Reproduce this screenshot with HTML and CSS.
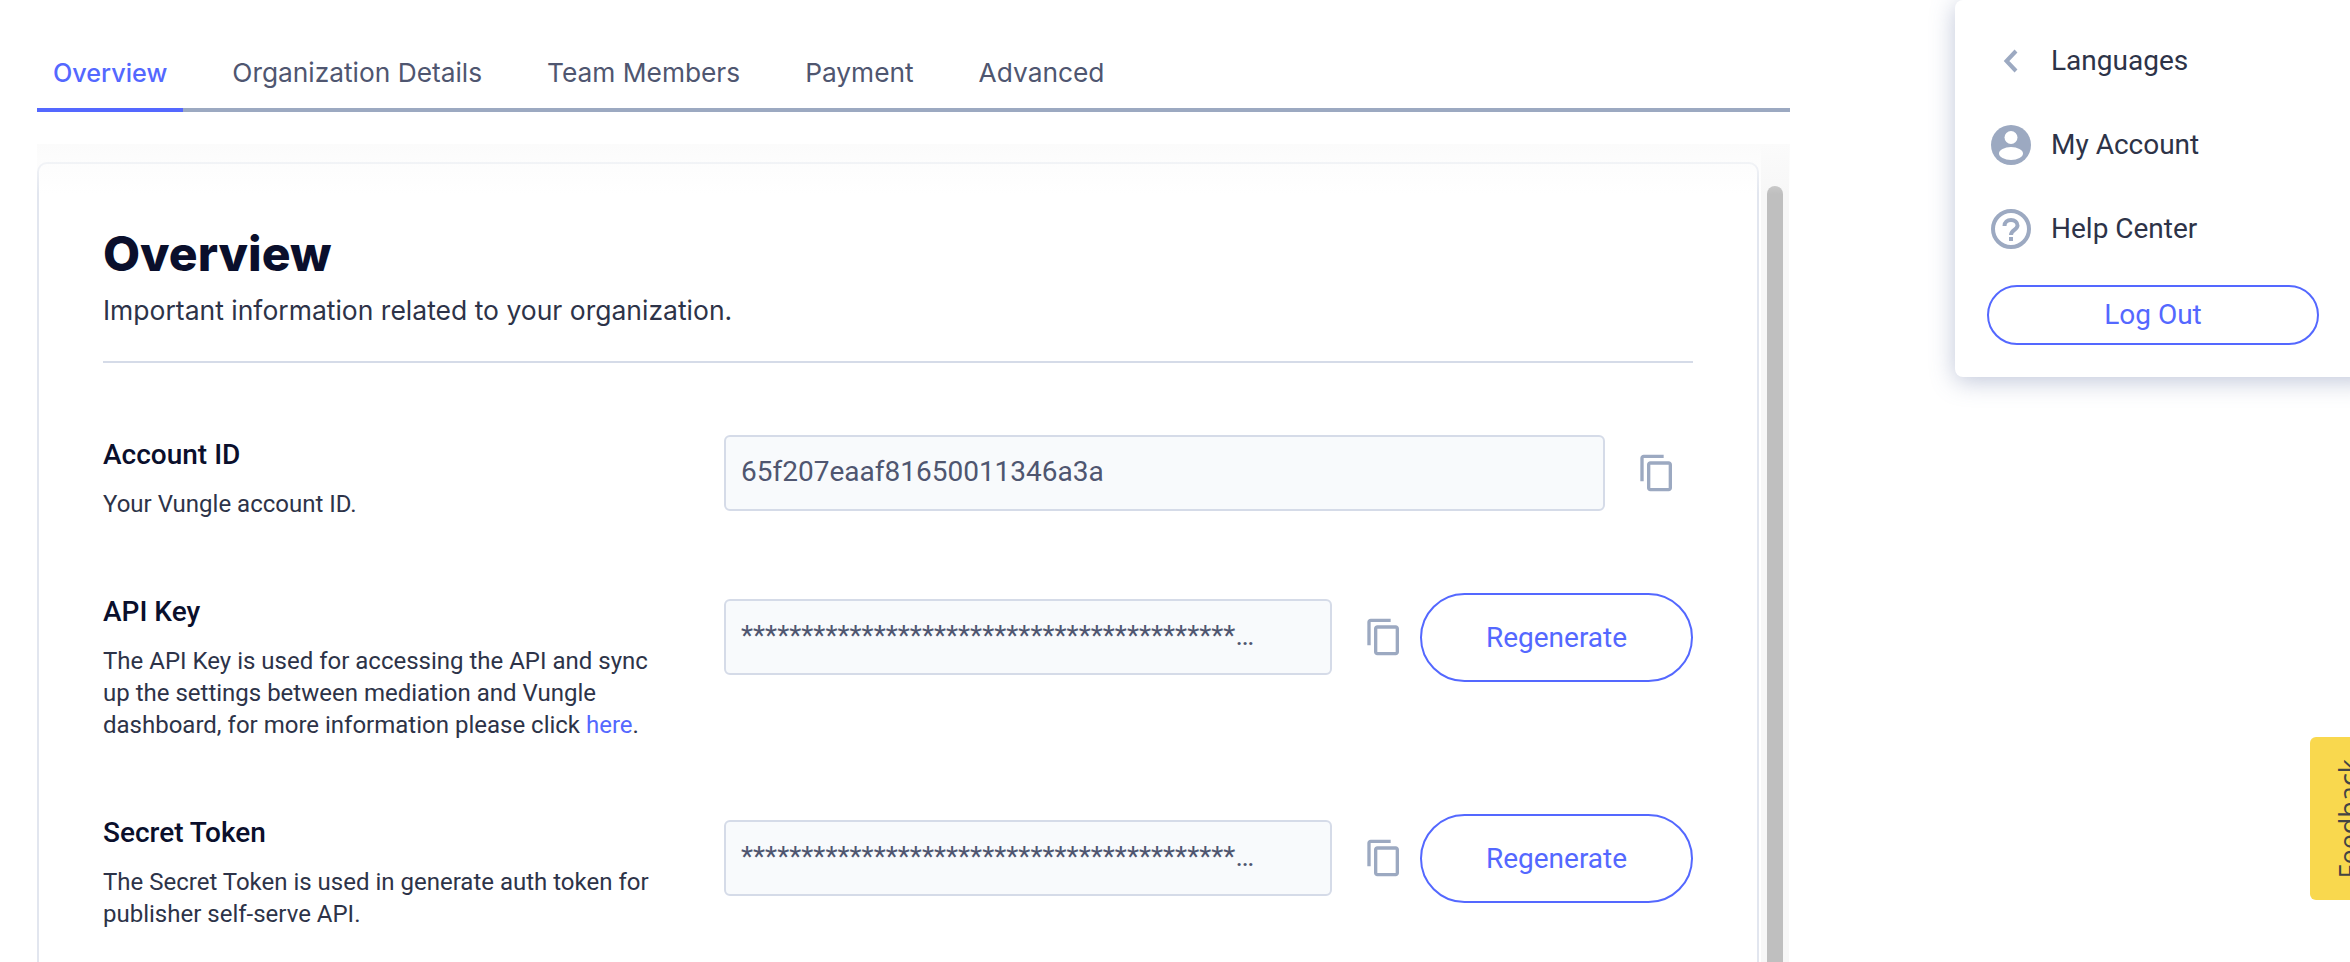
FILE: index.html
```html
<!DOCTYPE html>
<html lang="en">
<head>
<meta charset="utf-8">
<title>Overview</title>
<link rel="stylesheet" href="styles.css">
</head>
<body>
<main class="page">
  <nav class="tabs">
    <a class="tab active">Overview</a>
    <a class="tab">Organization Details</a>
    <a class="tab">Team Members</a>
    <a class="tab">Payment</a>
    <a class="tab">Advanced</a>
  </nav>
  <div class="scroll">
    <section class="card">
      <h1 class="title">Overview</h1>
      <p class="subtitle">Important information related to your organization.</p>
      <hr class="rule">
      <div class="row row-first">
        <div class="info">
          <h2 class="label">Account ID</h2>
          <p class="desc">Your Vungle account ID.</p>
        </div>
        <div class="controls">
          <div class="field"><span class="value">65f207eaaf81650011346a3a</span></div>
          <svg class="copy" viewBox="0 0 24 24"><path d="M16 1H4c-1.1 0-2 .9-2 2v14h2V3h12V1zm3 4H8c-1.1 0-2 .9-2 2v14c0 1.1.9 2 2 2h11c1.1 0 2-.9 2-2V7c0-1.1-.9-2-2-2zm0 16H8V7h11v14z"/></svg>
        </div>
      </div>
      <div class="row">
        <div class="info">
          <h2 class="label">API Key</h2>
          <p class="desc">The API Key is used for accessing the API and sync up the settings between mediation and Vungle dashboard, for more information please click <a class="link">here</a>.</p>
        </div>
        <div class="controls">
          <div class="field"><span class="value">****************************************************************</span></div>
          <svg class="copy" viewBox="0 0 24 24"><path d="M16 1H4c-1.1 0-2 .9-2 2v14h2V3h12V1zm3 4H8c-1.1 0-2 .9-2 2v14c0 1.1.9 2 2 2h11c1.1 0 2-.9 2-2V7c0-1.1-.9-2-2-2zm0 16H8V7h11v14z"/></svg>
          <button class="regen">Regenerate</button>
        </div>
      </div>
      <div class="row">
        <div class="info">
          <h2 class="label">Secret Token</h2>
          <p class="desc">The Secret Token is used in generate auth token for publisher self-serve API.</p>
        </div>
        <div class="controls">
          <div class="field"><span class="value">****************************************************************</span></div>
          <svg class="copy" viewBox="0 0 24 24"><path d="M16 1H4c-1.1 0-2 .9-2 2v14h2V3h12V1zm3 4H8c-1.1 0-2 .9-2 2v14c0 1.1.9 2 2 2h11c1.1 0 2-.9 2-2V7c0-1.1-.9-2-2-2zm0 16H8V7h11v14z"/></svg>
          <button class="regen">Regenerate</button>
        </div>
      </div>
    </section>
    <div class="track"><div class="thumb"></div></div>
  </div>
</main>
<aside class="menu">
  <div class="menu-item">
    <svg class="menu-icon" viewBox="0 0 40 40"><path class="chev" d="M25 10 L15.5 20 L25 30"/></svg>
    <span class="menu-text">Languages</span>
  </div>
  <div class="menu-item">
    <svg class="menu-icon" viewBox="0 0 40 40"><circle class="fill" cx="20" cy="20" r="20"/><circle class="hole" cx="20" cy="12.500" r="6.500"/><ellipse class="hole" cx="20" cy="28.500" rx="12" ry="6.500"/></svg>
    <span class="menu-text">My Account</span>
  </div>
  <div class="menu-item">
    <svg class="menu-icon" viewBox="0 0 40 40"><circle class="ring" cx="20" cy="20" r="18"/><path class="qmark" d="M13.500 17c0-3.800 2.900-6 6.500-6s6.500 2.300 6.500 5.500c0 4.500-6.500 4.500-6.500 9.500"/><rect class="fill" x="18" y="28" width="4" height="4"/></svg>
    <span class="menu-text">Help Center</span>
  </div>
  <button class="logout">Log Out</button>
</aside>
<div class="feedback"><span>Feedback</span></div>
</body>
</html>
```

FILE: styles.css
```css
* { box-sizing: border-box; }
html, body { margin: 0; height: 100%; }
body {
  overflow: hidden;
  background: #fff;
  font-family: "Roboto", sans-serif;
  color: #2d3348;
  position: relative;
}
.page {
  width: 1790px;
  height: 962px;
  padding: 44px 0 0 37px;
  display: flex;
  flex-direction: column;
}
.tabs {
  display: flex;
  gap: 33px;
  height: 68px;
  border-bottom: 4px solid #9ca9c1;
  flex: none;
}
.tab {
  padding: 12px 16px 0;
  height: 68px;
  font-family: "Inter", sans-serif;
  font-size: 26.300px;
  line-height: 34px;
  color: #4f5670;
  white-space: nowrap;
}
.tab.active {
  color: #5468ff;
  font-size: 25.200px;
  font-weight: 500;
  border-bottom: 4px solid #5468ff;
}
.scroll {
  position: relative;
  flex: 1;
  min-height: 0;
  margin-top: 32px;
  padding-top: 18px;
  display: flex;
  overflow: hidden;
}
.scroll::before {
  content: "";
  position: absolute;
  left: 0;
  right: 0;
  top: 0;
  height: 50px;
  background: linear-gradient(#fbfbfb, rgba(255, 255, 255, 0));
  pointer-events: none;
}
.card {
  width: 1722px;
  flex: none;
  height: 1000px;
  padding: 60px 64px 0;
  background: #fff;
  border: 2px solid #e2e6ef;
  border-radius: 10px;
}
.title {
  margin: 0;
  font-family: "Inter", sans-serif;
  font-size: 48px;
  font-weight: 800;
  line-height: 60px;
  color: #0a0f2c;
}
.subtitle {
  margin: 8px 0 0;
  font-family: "Inter", sans-serif;
  font-size: 26.500px;
  line-height: 36px;
  color: #2d3348;
}
.rule {
  margin: 33px 0 0;
  border: 0;
  border-top: 2px solid #d5dbe8;
}
.row {
  display: flex;
  margin-top: 72px;
}
.info {
  width: 621px;
  flex: none;
  padding-top: 4px;
}
.label {
  margin: 0;
  font-size: 28px;
  font-weight: 500;
  line-height: 32px;
  color: #0a0f2c;
}
.desc {
  width: 560px;
  margin: 17px 0 0;
  font-size: 24px;
  line-height: 32px;
  color: #2d3348;
}
.link { color: #5468ff; }
.controls {
  flex: 1;
  min-width: 0;
  display: flex;
  align-items: center;
  height: 89px;
}
.row-first .controls { height: 76px; }
.field {
  flex: 1;
  min-width: 0;
  height: 76px;
  padding: 0 72px 2px 15px;
  display: flex;
  align-items: center;
  background: #f8fafc;
  border: 2px solid #d5dbe8;
  border-radius: 6px;
}
.value {
  min-width: 0;
  overflow: hidden;
  white-space: nowrap;
  text-overflow: ellipsis;
  font-size: 28px;
  line-height: 34px;
  color: #4f5670;
}
.copy {
  flex: none;
  width: 40px;
  height: 40px;
  margin: 0 16px 0 32px;
  fill: #9ca9c1;
}
.regen {
  flex: none;
  width: 273px;
  height: 89px;
  margin-top: 2px;
  background: #fff;
  border: 2px solid #5468ff;
  border-radius: 45px;
  font-family: "Roboto", sans-serif;
  font-size: 28px;
  color: #5468ff;
}
.menu {
  position: absolute;
  left: 1955px;
  top: 0;
  width: 420px;
  height: 377px;
  padding: 19px 32px 0 36px;
  background: #fff;
  border-radius: 8px;
  box-shadow: 0 4px 24px rgba(113, 128, 170, 0.45);
}
.menu-item {
  display: flex;
  align-items: center;
  gap: 20px;
  height: 84px;
  font-size: 28px;
  color: #2d3348;
}
.menu-text { padding-bottom: 2px; }
.menu-icon {
  width: 40px;
  height: 40px;
  flex: none;
}
.chev {
  fill: none;
  stroke: #9ca9c1;
  stroke-width: 4;
}
.fill { fill: #9ca9c1; }
.hole { fill: #fff; }
.ring {
  fill: none;
  stroke: #9ca9c1;
  stroke-width: 4;
}
.qmark {
  fill: none;
  stroke: #9ca9c1;
  stroke-width: 4;
}
.logout {
  display: block;
  width: 332px;
  height: 60px;
  margin: 14px 0 0 -4px;
  padding-bottom: 3px;
  background: #fff;
  border: 2px solid #5468ff;
  border-radius: 30px;
  font-family: "Roboto", sans-serif;
  font-size: 28px;
  color: #5468ff;
}
.track {
  width: 30px;
  flex: none;
  margin-top: -18px;
  padding: 42px 6px 0;
  background: #f7f7f7;
  border-left: 2px solid #fff;
}
.thumb {
  height: 900px;
  background: #bfbfbf;
  border-radius: 8px;
}
.feedback {
  position: absolute;
  left: 2310px;
  top: 737px;
  width: 60px;
  height: 163px;
  padding-left: 24px;
  display: flex;
  align-items: center;
  justify-content: flex-start;
  background: #f9d84e;
  border-radius: 6px;
}
.feedback span {
  writing-mode: vertical-rl;
  transform: rotate(180deg);
  font-family: "Open Sans", sans-serif;
  font-size: 27px;
  line-height: 30px;
  color: #444;
}
```
